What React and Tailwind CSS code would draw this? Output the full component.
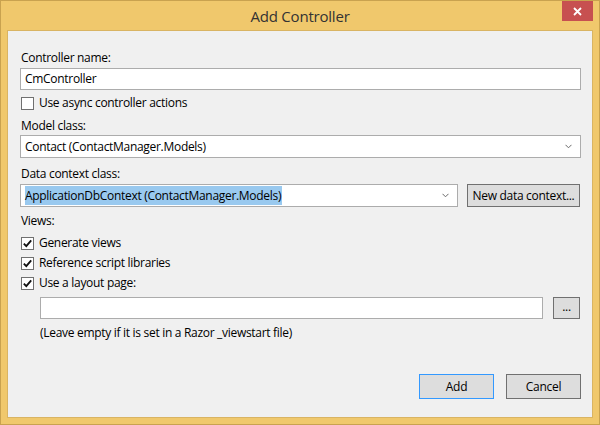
import React from "react";

const font = { fontFamily: '"Segoe UI", "Open Sans", "Noto Sans", sans-serif' };

function Check({ checked }) {
  return (
    <span className="w-[13px] h-[13px] border border-[#707070] bg-white flex items-center justify-center shrink-0">
      {checked && (
        <svg width="11" height="11" viewBox="0 0 11 11">
          <path d="M1.8 5.6 L4.3 8.2 L9.2 2.4" fill="none" stroke="#111" strokeWidth="1.8" />
        </svg>
      )}
    </span>
  );
}

function CheckRow({ checked, label }) {
  return (
    <div className="flex items-center h-[16px] pl-[1px]">
      <Check checked={checked} />
      <span className="ml-[5px] leading-[16px]">{label}</span>
    </div>
  );
}

function Chevron() {
  return (
    <svg width="7" height="5" viewBox="0 0 7 5">
      <path d="M0.5 0.8 L3.5 3.8 L6.5 0.8" fill="none" stroke="#6a6a6a" strokeWidth="1" />
    </svg>
  );
}

function Combo({ children, className }) {
  return (
    <div className={"h-[23px] border border-[#acacac] bg-white flex items-center pl-[4px] pr-[8px] " + className}>
      <div className="flex-1">{children}</div>
      <Chevron />
    </div>
  );
}

export default function App() {
  return (
    <div className="w-[600px] h-[425px] border border-[#c9a24f] bg-[#f0c86c] text-[12px] tracking-[-0.3px] text-black relative" style={font}>
      {/* title bar */}
      <div className="h-[29px] flex items-center justify-center text-[15px] tracking-[-0.2px] text-[#333333] pt-[1px]">
        Add Controller
      </div>
      <div className="absolute top-0 right-[6px] w-[31px] h-[20px] bg-[#c75050] flex items-center justify-center">
        <svg width="9" height="9" viewBox="0 0 9 9">
          <path d="M1 1 L8 8 M8 1 L1 8" stroke="#fff" strokeWidth="1.8" />
        </svg>
      </div>

      {/* client area */}
      <div className="ml-[6px] w-[586px] h-[388px] border border-[#d9b463] bg-[#f0f0f0] pl-[12px] pr-[11px] pt-[19px]">
        <div className="pl-[1px] leading-[16px]">Controller name:</div>
        <div className="mt-[2px] h-[22px] border border-[#acacac] bg-white flex items-center pl-[4px]">
          CmController
        </div>
        <div className="mt-[5px]">
          <CheckRow checked={false} label="Use async controller actions" />
        </div>

        <div className="mt-[7px] pl-[1px] leading-[16px]">Model class:</div>
        <Combo className="mt-[1px]">Contact (ContactManager.Models)</Combo>

        <div className="mt-[8px] pl-[1px] leading-[16px]">Data context class:</div>
        <div className="mt-[2px] flex items-center">
          <Combo className="w-[438px] pl-[3px]">
            <span className="bg-[#99c9ef] py-[1px] pr-[1px]">ApplicationDbContext (ContactManager.Models)</span>
          </Combo>
          <button className="ml-[9px] w-[113px] h-[23px] border border-[#707070] bg-[#dddddd] flex items-center justify-center">
            New data context...
          </button>
        </div>

        <div className="mt-[6px] pl-[1px] leading-[16px]">Views:</div>
        <div className="mt-[6px] flex flex-col gap-[4px]">
          <CheckRow checked label="Generate views" />
          <CheckRow checked label="Reference script libraries" />
          <CheckRow checked label="Use a layout page:" />
        </div>

        <div className="mt-[6px] ml-[20px] flex items-center">
          <div className="w-[503px] h-[22px] border border-[#acacac] bg-white" />
          <button className="ml-[10px] w-[27px] h-[22px] border border-[#707070] bg-[#dddddd] flex items-center justify-center leading-none pb-[3px]">
            ...
          </button>
        </div>
        <div className="mt-[6px] ml-[20px] leading-[16px]">(Leave empty if it is set in a Razor _viewstart file)</div>

        <div className="mt-[33px] flex justify-end gap-[12px]">
          <button className="w-[75px] h-[25px] border border-[#3399ff] bg-[#dddddd] flex items-center justify-center">
            Add
          </button>
          <button className="w-[75px] h-[25px] border border-[#707070] bg-[#dddddd] flex items-center justify-center">
            Cancel
          </button>
        </div>
      </div>
    </div>
  );
}
